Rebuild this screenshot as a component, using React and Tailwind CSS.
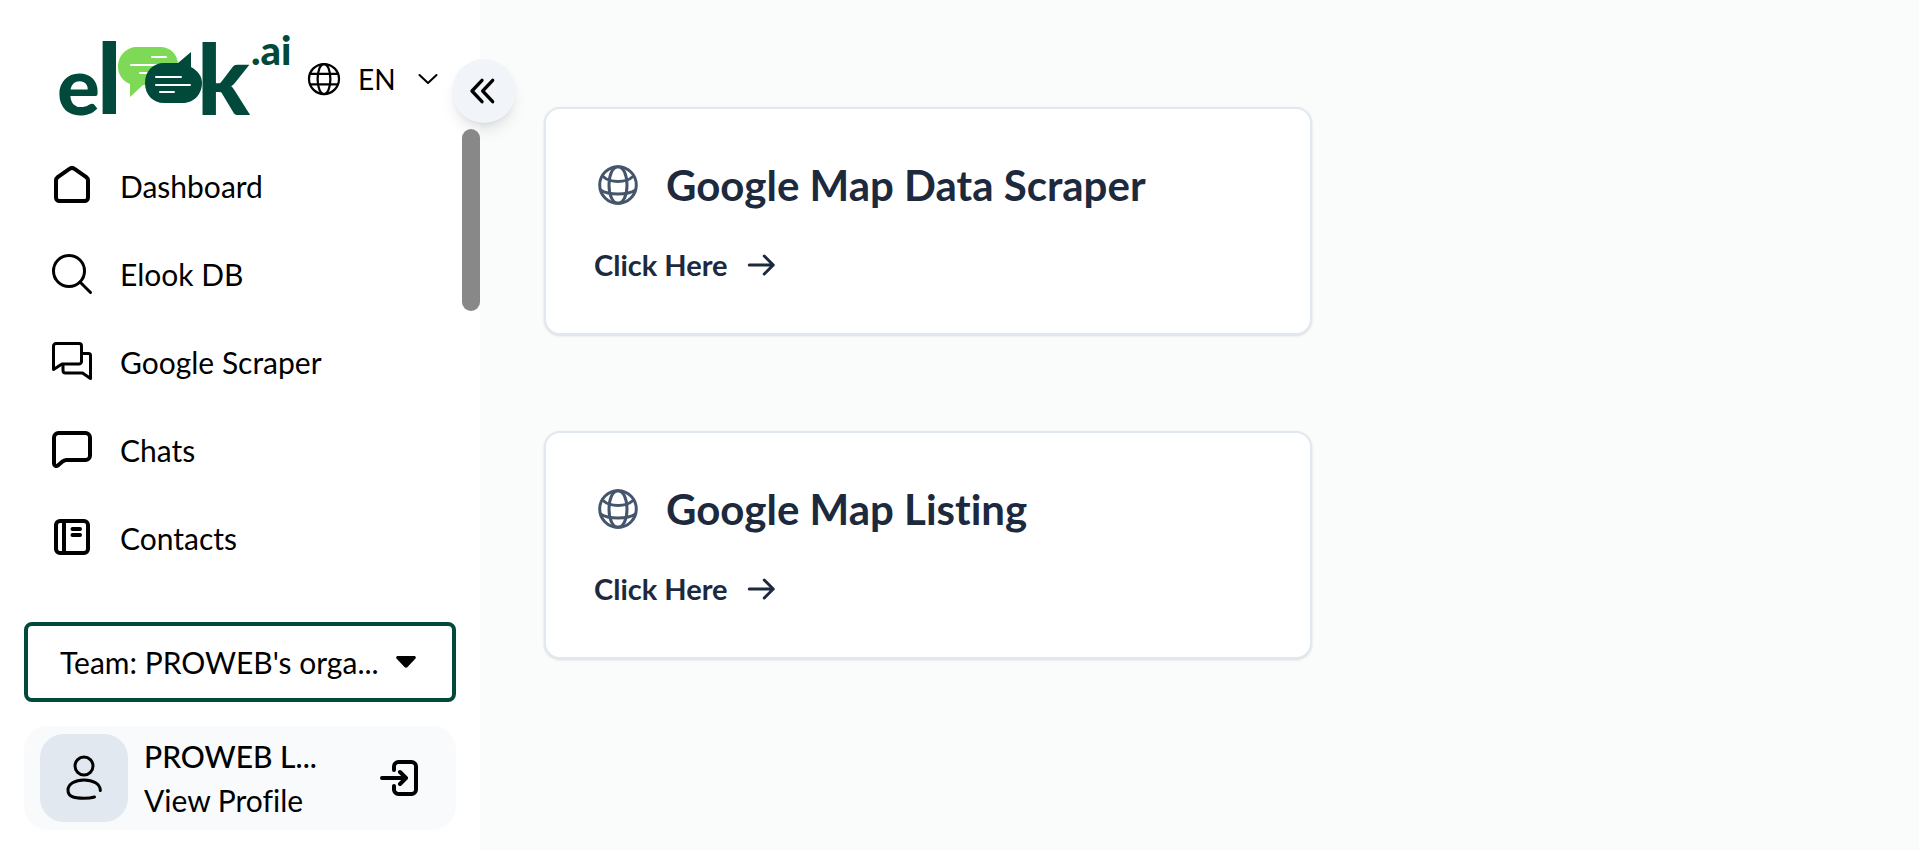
const navItems = [
  { label: 'Dashboard', icon: HomeIcon },
  { label: 'Elook DB', icon: SearchIcon },
  { label: 'Google Scraper', icon: ScraperIcon },
  { label: 'Chats', icon: ChatIcon },
  { label: 'Contacts', icon: ContactsIcon },
];

const cards = ['Google Map Data Scraper', 'Google Map Listing'];

function Icon({ children, className = 'size-12', strokeWidth = 4 }) {
  return (
    <svg
      viewBox="0 0 48 48"
      className={`shrink-0 ${className}`}
      fill="none"
      stroke="currentColor"
      strokeWidth={strokeWidth}
      strokeLinecap="round"
      strokeLinejoin="round"
      aria-hidden="true"
    >
      {children}
    </svg>
  );
}

function HomeIcon() {
  return (
    <Icon>
      <path d="M8 18.5c0-1.400.6-2.500 1.700-3.400l11.800-8.200c1.500-1.200 3.500-1.200 5 0l11.800 8.200c1.100.9 1.700 2 1.700 3.400V35.500a3.500 3.500 0 0 1-3.500 3.500h-25A3.500 3.500 0 0 1 8 35.500Z" />
    </Icon>
  );
}

function SearchIcon() {
  return (
    <Icon strokeWidth={3}>
      <circle cx="21" cy="21" r="15.500" />
      <path d="m32 32 10.500 10.500" />
    </Icon>
  );
}

function ScraperIcon() {
  return (
    <Icon strokeWidth={3}>
      <path d="M5.500 31.500V8A2.500 2.500 0 0 1 8 5.500h23A2.500 2.500 0 0 1 33.500 8v15.500A2.500 2.500 0 0 1 31 26H14Z" />
      <path d="M34 15.500h6.500A2 2 0 0 1 42.500 17.500V40.500L34.500 35H17.500a2.500 2.500 0 0 1-2.500-2.500V27" />
    </Icon>
  );
}

function ChatIcon() {
  return (
    <Icon>
      <path d="M10.500 7h27A4.500 4.500 0 0 1 42 11.500v18a4.500 4.500 0 0 1-4.500 4.500H18.500c-1.500 0-2.500.4-3.700 1.300l-5 4.200C8.200 40.800 6 39.700 6 37.500v-26A4.500 4.500 0 0 1 10.500 7Z" />
    </Icon>
  );
}

function ContactsIcon() {
  return (
    <Icon>
      <rect x="8" y="7" width="32" height="32" rx="4" />
      <path d="M16 7v32M24.500 15h7.500M24.500 21h7.500" />
    </Icon>
  );
}

function GlobeIcon() {
  return (
    <Icon className="size-12 text-slate-600" strokeWidth={3}>
      <circle cx="24" cy="24" r="18.300" />
      <path d="M24 5.700c-5.500 0-9 8.500-9 18.300s3.500 18.300 9 18.300 9-8.500 9-18.300-3.500-18.300-9-18.300Z" />
      <path d="M9 15.500c4 3.700 9.500 5 15 5s11-1.300 15-5M6.500 29c4 2.700 11 4 17.500 4s13.500-1.300 17.500-4" />
    </Icon>
  );
}

function Logo() {
  return (
    <svg viewBox="-4 -25 240 130" className="h-[130px] w-60 shrink-0" role="img" aria-label="elook.ai" fill="#014a3b">
      <g fontFamily="Lato, sans-serif" fontWeight="900">
        <text x="-3" y="76" fontSize="80">e</text>
        <text x="37" y="75" fontSize="97">l</text>
        <text x="137" y="76" fontSize="97">k</text>
        <text x="191" y="26" fontSize="40">.ai</text>
      </g>
      <path
        fill="#7ed957"
        d="M77 8h23c11 0 18 8 18 18s-8 20-18 20H83L70 58V45c-7-3-12-9-12-17C58 16 67 8 77 8Z"
      />
      <path stroke="#fff" strokeWidth="2" strokeLinecap="round" d="M92 18h14M71 26h26M80 34h12" />
      <path d="M104 24h14l13-11v15c7 4 11 9 11 16 0 11-8 20-19 20h-19c-11 0-19-8-19-20s8-20 19-20Z" />
      <path stroke="#fff" strokeWidth="2" strokeLinecap="round" d="M96 38h25M96 46h34M100 53h14" />
    </svg>
  );
}

function Sidebar() {
  return (
    <aside className="relative flex w-[480px] shrink-0 flex-col bg-white text-[30px]">
      <header className="flex items-center pt-3.5 pr-10 pl-14">
        <Logo />
        <button type="button" className="ml-2.5 flex flex-1 items-center text-[28px]">
          <Icon className="size-9" strokeWidth={3}>
            <circle cx="24" cy="24" r="20" />
            <path d="M24 4c-5 0-8.500 9-8.500 20S19 44 24 44 32.500 35 32.500 24 29 4 24 4ZM5.500 17h37M5.500 31h37" />
          </Icon>
          <span className="ml-4">EN</span>
          <Icon className="ml-auto size-6" strokeWidth={4}>
            <path d="m7 16 17 16 17-16" />
          </Icon>
        </button>
      </header>

      <button
        type="button"
        aria-label="Collapse sidebar"
        className="absolute top-[59px] -right-9 flex size-16 items-center justify-center rounded-full bg-slate-100 shadow-lg"
      >
        <Icon className="size-8" strokeWidth={5}>
          <path d="M21 8 6 24l15 16M37 8 22 24l15 16" />
        </Icon>
      </button>
      <div className="absolute top-[129px] right-0 h-[182px] w-[18px] rounded-full bg-[#888]" />

      <nav className="flex flex-col gap-4 px-12 pt-1.5">
        {navItems.map(({ label, icon: ItemIcon }) => (
          <a key={label} href="#" className="flex h-[72px] items-center gap-6">
            <ItemIcon />
            <span>{label}</span>
          </a>
        ))}
      </nav>

      <div className="mt-auto flex flex-col gap-6 px-6 pb-5">
        <button
          type="button"
          className="flex h-20 items-center justify-between rounded-lg border-4 border-[#014a3b] pr-9 pl-8"
        >
          <span className="truncate">Team: PROWEB's orga...</span>
          <svg viewBox="0 0 20 12" className="h-3 w-5 shrink-0" aria-hidden="true">
            <path d="M2 0h16c1.800 0 2.400 1.500 1.300 2.700L11.500 11c-.9 1-2.100 1-3 0L.7 2.700C-.4 1.500.2 0 2 0Z" />
          </svg>
        </button>

        <div className="flex items-center rounded-3xl bg-slate-50 px-4 py-2">
          <div className="flex size-[88px] items-center justify-center rounded-3xl bg-slate-200">
            <Icon strokeWidth={3}>
              <circle cx="24" cy="12" r="9" />
              <path d="M34.500 43c-3 .9-6.500 1.300-10.500 1.300-11.500 0-16-2.300-16-8.300s7-10 16-10 16.300 4 16.300 10.500" />
            </Icon>
          </div>
          <a href="#" className="ml-4 flex flex-col leading-11 [font-variant-ligatures:none]">
            <span className="font-medium">PROWEB L...</span>
            <span>View Profile</span>
          </a>
          <button type="button" aria-label="Log out" className="mr-3.5 ml-auto">
            <Icon>
              <path d="M16 16v-3.500A4.500 4.500 0 0 1 20.500 8h13a4.500 4.500 0 0 1 4.500 4.500v23a4.500 4.500 0 0 1-4.500 4.500h-13a4.500 4.500 0 0 1-4.500-4.500V32M4 24h23M22 18l6 6-6 6" />
            </Icon>
          </button>
        </div>
      </div>
    </aside>
  );
}

function ToolCard({ title }) {
  return (
    <section className="rounded-2xl border-2 border-slate-200 bg-white p-12 text-slate-800 shadow-sm">
      <div className="flex h-14 items-center gap-6">
        <GlobeIcon />
        <h5 className="text-[42px] font-bold [font-variant-ligatures:none]">{title}</h5>
      </div>
      <a href="#" className="mt-8 flex h-10 w-fit items-center gap-4 text-[29px] font-bold">
        Click Here
        <Icon className="size-9" strokeWidth={4}>
          <path d="M7 24h32M27 12l12 12-12 12" />
        </Icon>
      </a>
    </section>
  );
}

function App() {
  return (
    <div className="flex min-h-screen bg-[#fafcfb] font-[Lato,sans-serif] text-black">
      <Sidebar />
      <main className="flex min-w-0 flex-1 flex-col gap-24 px-16 pt-[107px]">
        {cards.map((title) => (
          <div key={title} className="max-w-3xl">
            <ToolCard title={title} />
          </div>
        ))}
      </main>
    </div>
  );
}

export default App;
